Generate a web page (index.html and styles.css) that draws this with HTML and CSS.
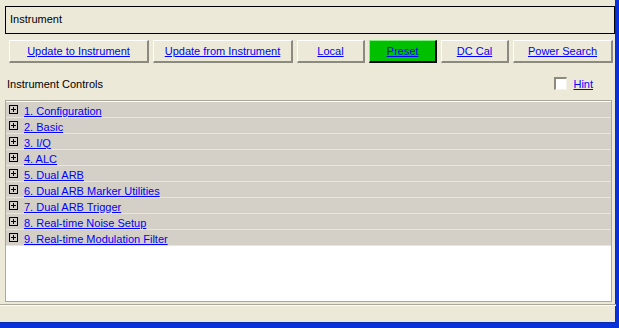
FILE: index.html
```html
<!DOCTYPE html>
<html>
<head>
    <title>Instrument</title>
    <link rel="stylesheet" href="styles.css">
</head>

<body>
    <div class="window">
        <div class="title">Instrument</div>

        <div class="buttons">
            <button class="btn btn-wide">Update to Instrument</button>
            <button class="btn btn-wide">Update from Instrument</button>
            <button class="btn">Local</button>
            <button class="btn btn-preset">Preset</button>
            <button class="btn">DC Cal</button>
            <button class="btn btn-search">Power Search</button>
        </div>

        <div class="controls-head">
            <span>Instrument Controls</span>
            <label class="hint"><span class="check"></span><span class="link">Hint</span></label>
        </div>

        <div class="tree">
            <div class="row"><svg class="plus" width="9" height="9" viewBox="0 0 9 9"><rect x="0.5" y="0.5" width="8" height="8" fill="none" stroke="#000"/><path d="M2 4.5h5M4.5 2v5" stroke="#000"/></svg><a class="link">1. Configuration</a></div>
            <div class="row"><svg class="plus" width="9" height="9" viewBox="0 0 9 9"><rect x="0.5" y="0.5" width="8" height="8" fill="none" stroke="#000"/><path d="M2 4.5h5M4.5 2v5" stroke="#000"/></svg><a class="link">2. Basic</a></div>
            <div class="row"><svg class="plus" width="9" height="9" viewBox="0 0 9 9"><rect x="0.5" y="0.5" width="8" height="8" fill="none" stroke="#000"/><path d="M2 4.5h5M4.5 2v5" stroke="#000"/></svg><a class="link">3. I/Q</a></div>
            <div class="row"><svg class="plus" width="9" height="9" viewBox="0 0 9 9"><rect x="0.5" y="0.5" width="8" height="8" fill="none" stroke="#000"/><path d="M2 4.5h5M4.5 2v5" stroke="#000"/></svg><a class="link">4. ALC</a></div>
            <div class="row"><svg class="plus" width="9" height="9" viewBox="0 0 9 9"><rect x="0.5" y="0.5" width="8" height="8" fill="none" stroke="#000"/><path d="M2 4.5h5M4.5 2v5" stroke="#000"/></svg><a class="link">5. Dual ARB</a></div>
            <div class="row"><svg class="plus" width="9" height="9" viewBox="0 0 9 9"><rect x="0.5" y="0.5" width="8" height="8" fill="none" stroke="#000"/><path d="M2 4.5h5M4.5 2v5" stroke="#000"/></svg><a class="link">6. Dual ARB Marker Utilities</a></div>
            <div class="row"><svg class="plus" width="9" height="9" viewBox="0 0 9 9"><rect x="0.5" y="0.5" width="8" height="8" fill="none" stroke="#000"/><path d="M2 4.5h5M4.5 2v5" stroke="#000"/></svg><a class="link">7. Dual ARB Trigger</a></div>
            <div class="row"><svg class="plus" width="9" height="9" viewBox="0 0 9 9"><rect x="0.5" y="0.5" width="8" height="8" fill="none" stroke="#000"/><path d="M2 4.5h5M4.5 2v5" stroke="#000"/></svg><a class="link">8. Real-time Noise Setup</a></div>
            <div class="row"><svg class="plus" width="9" height="9" viewBox="0 0 9 9"><rect x="0.5" y="0.5" width="8" height="8" fill="none" stroke="#000"/><path d="M2 4.5h5M4.5 2v5" stroke="#000"/></svg><a class="link">9. Real-time Modulation Filter</a></div>
        </div>

        <div class="status"></div>
    </div>
</body>
</html>
```

FILE: styles.css
```css
body {
    margin: 0;
    background-color: #ece9d8;
    font-family: "Liberation Sans", Arial, sans-serif;
    font-size: 11px;
    color: #000;
}

.window {
    width: 616px;
    height: 323px;
    background-color: #ece9d8;
    border-right: 3px solid #0831d9;
    border-bottom: 5px solid #0831d9;
    box-shadow: inset -1px -1px 0 #0a2ab8;
    overflow: hidden;
}

.title {
    box-sizing: border-box;
    margin: 6px 0 0 5px;
    width: 610px;
    height: 28px;
    border: 1px solid #000;
    padding-left: 4px;
    line-height: 25px;
}

.buttons {
    display: flex;
    gap: 4px;
    margin-top: 6px;
    padding-left: 9px;
}

.btn {
    box-sizing: border-box;
    width: 68px;
    height: 23px;
    padding: 0;
    font-family: "Liberation Sans", Arial, sans-serif;
    font-size: 11px;
    color: #0000ff;
    text-decoration: underline;
    background-color: #ece9d8;
    border-top: 1px solid #fff;
    border-left: 1px solid #fff;
    border-right: 2px solid #8c8a7e;
    border-bottom: 2px solid #8c8a7e;
}

.btn-wide {
    width: 140px;
}

.btn-search {
    width: 100px;
}

.btn-preset {
    background-color: #00c000;
    border-top-color: #7cf07c;
    border-left-color: #7cf07c;
    border-right-color: #000;
    border-bottom-color: #000;
}

.controls-head {
    display: flex;
    justify-content: space-between;
    align-items: center;
    height: 13px;
    margin: 14px 0 10px 7px;
    padding-right: 23px;
}

.hint {
    display: flex;
    align-items: center;
    gap: 6px;
}

.check {
    box-sizing: border-box;
    width: 13px;
    height: 13px;
    background-color: #fff;
    border-top: 2px solid #8c8a7e;
    border-left: 2px solid #8c8a7e;
    border-right: 1px solid #f4f2e8;
    border-bottom: 1px solid #f4f2e8;
}

.link {
    color: #0000ff;
    text-decoration: underline;
}

.tree {
    box-sizing: border-box;
    margin-left: 5px;
    width: 607px;
    height: 202px;
    background-color: #fff;
    border: 1px solid #aca899;
    padding-top: 1px;
}

.row {
    display: flex;
    align-items: center;
    gap: 6px;
    height: 15px;
    padding-left: 3px;
    background-color: #d4d0c8;
    border-bottom: 1px solid #e8e6dc;
}

.plus {
    flex: none;
    background-color: #d4d0c8;
}

.row .link {
    padding-top: 2px;
}

.status {
    margin-top: 2px;
    border-top: 1px solid #aca899;
    border-bottom: 1px solid #fff;
}
```
